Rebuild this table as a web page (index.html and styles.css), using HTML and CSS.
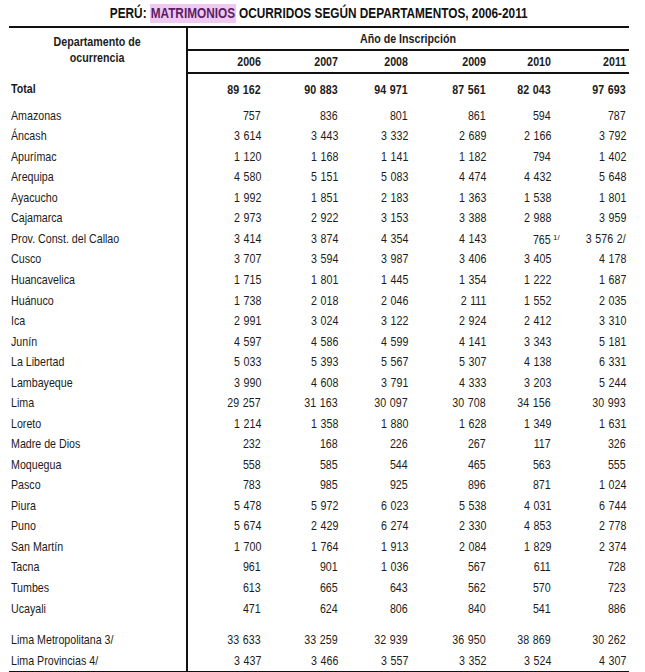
FILE: index.html
```html
<!DOCTYPE html>
<html lang="es">
<head>
<meta charset="utf-8">
<title>Perú: Matrimonios ocurridos según departamentos, 2006-2011</title>
<link rel="stylesheet" href="styles.css">
</head>
<body>
<div class="page">
  <h1 class="title"><span class="n">PERÚ: <span class="hl">MATRIMONIOS</span> OCURRIDOS SEGÚN DEPARTAMENTOS, 2006-2011</span></h1>
  <table class="stats">
    <colgroup>
      <col class="c-dep">
      <col class="c-y1"><col class="c-y2"><col class="c-y3"><col class="c-y4"><col class="c-y5"><col class="c-y6">
    </colgroup>
    <thead>
      <tr class="h1">
        <th rowspan="2" class="dep-head"><span class="n">Departamento de<br>ocurrencia</span></th>
        <th colspan="6" class="group"><span class="n">Año de Inscripción</span></th>
      </tr>
      <tr class="h2">
        <th><span class="n">2006</span></th><th><span class="n">2007</span></th><th><span class="n">2008</span></th><th><span class="n">2009</span></th><th class="y10"><span class="n">2010</span></th><th><span class="n">2011</span></th>
      </tr>
    </thead>
    <tbody>
      <tr class="total"><td><span class="n">Total</span></td><td><span class="n">89 162</span></td><td><span class="n">90 883</span></td><td><span class="n">94 971</span></td><td><span class="n">87 561</span></td><td class="y10"><span class="n">82 043</span></td><td><span class="n">97 693</span></td></tr>
      <tr><td><span class="n">Amazonas</span></td><td><span class="n">757</span></td><td><span class="n">836</span></td><td><span class="n">801</span></td><td><span class="n">861</span></td><td class="y10"><span class="n">594</span></td><td><span class="n">787</span></td></tr>
      <tr><td><span class="n">Áncash</span></td><td><span class="n">3 614</span></td><td><span class="n">3 443</span></td><td><span class="n">3 332</span></td><td><span class="n">2 689</span></td><td class="y10"><span class="n">2 166</span></td><td><span class="n">3 792</span></td></tr>
      <tr><td><span class="n">Apurímac</span></td><td><span class="n">1 120</span></td><td><span class="n">1 168</span></td><td><span class="n">1 141</span></td><td><span class="n">1 182</span></td><td class="y10"><span class="n">794</span></td><td><span class="n">1 402</span></td></tr>
      <tr><td><span class="n">Arequipa</span></td><td><span class="n">4 580</span></td><td><span class="n">5 151</span></td><td><span class="n">5 083</span></td><td><span class="n">4 474</span></td><td class="y10"><span class="n">4 432</span></td><td><span class="n">5 648</span></td></tr>
      <tr><td><span class="n">Ayacucho</span></td><td><span class="n">1 992</span></td><td><span class="n">1 851</span></td><td><span class="n">2 183</span></td><td><span class="n">1 363</span></td><td class="y10"><span class="n">1 538</span></td><td><span class="n">1 801</span></td></tr>
      <tr><td><span class="n">Cajamarca</span></td><td><span class="n">2 973</span></td><td><span class="n">2 922</span></td><td><span class="n">3 153</span></td><td><span class="n">3 388</span></td><td class="y10"><span class="n">2 988</span></td><td><span class="n">3 959</span></td></tr>
      <tr><td><span class="n">Prov. Const. del Callao</span></td><td><span class="n">3 414</span></td><td><span class="n">3 874</span></td><td><span class="n">4 354</span></td><td><span class="n">4 143</span></td><td class="y10"><span class="n">765</span><span class="note">1/</span></td><td><span class="n">3 576 2/</span></td></tr>
      <tr><td><span class="n">Cusco</span></td><td><span class="n">3 707</span></td><td><span class="n">3 594</span></td><td><span class="n">3 987</span></td><td><span class="n">3 406</span></td><td class="y10"><span class="n">3 405</span></td><td><span class="n">4 178</span></td></tr>
      <tr><td><span class="n">Huancavelica</span></td><td><span class="n">1 715</span></td><td><span class="n">1 801</span></td><td><span class="n">1 445</span></td><td><span class="n">1 354</span></td><td class="y10"><span class="n">1 222</span></td><td><span class="n">1 687</span></td></tr>
      <tr><td><span class="n">Huánuco</span></td><td><span class="n">1 738</span></td><td><span class="n">2 018</span></td><td><span class="n">2 046</span></td><td><span class="n">2 111</span></td><td class="y10"><span class="n">1 552</span></td><td><span class="n">2 035</span></td></tr>
      <tr><td><span class="n">Ica</span></td><td><span class="n">2 991</span></td><td><span class="n">3 024</span></td><td><span class="n">3 122</span></td><td><span class="n">2 924</span></td><td class="y10"><span class="n">2 412</span></td><td><span class="n">3 310</span></td></tr>
      <tr><td><span class="n">Junín</span></td><td><span class="n">4 597</span></td><td><span class="n">4 586</span></td><td><span class="n">4 599</span></td><td><span class="n">4 141</span></td><td class="y10"><span class="n">3 343</span></td><td><span class="n">5 181</span></td></tr>
      <tr><td><span class="n">La Libertad</span></td><td><span class="n">5 033</span></td><td><span class="n">5 393</span></td><td><span class="n">5 567</span></td><td><span class="n">5 307</span></td><td class="y10"><span class="n">4 138</span></td><td><span class="n">6 331</span></td></tr>
      <tr><td><span class="n">Lambayeque</span></td><td><span class="n">3 990</span></td><td><span class="n">4 608</span></td><td><span class="n">3 791</span></td><td><span class="n">4 333</span></td><td class="y10"><span class="n">3 203</span></td><td><span class="n">5 244</span></td></tr>
      <tr><td><span class="n">Lima</span></td><td><span class="n">29 257</span></td><td><span class="n">31 163</span></td><td><span class="n">30 097</span></td><td><span class="n">30 708</span></td><td class="y10"><span class="n">34 156</span></td><td><span class="n">30 993</span></td></tr>
      <tr><td><span class="n">Loreto</span></td><td><span class="n">1 214</span></td><td><span class="n">1 358</span></td><td><span class="n">1 880</span></td><td><span class="n">1 628</span></td><td class="y10"><span class="n">1 349</span></td><td><span class="n">1 631</span></td></tr>
      <tr><td><span class="n">Madre de Dios</span></td><td><span class="n">232</span></td><td><span class="n">168</span></td><td><span class="n">226</span></td><td><span class="n">267</span></td><td class="y10"><span class="n">117</span></td><td><span class="n">326</span></td></tr>
      <tr><td><span class="n">Moquegua</span></td><td><span class="n">558</span></td><td><span class="n">585</span></td><td><span class="n">544</span></td><td><span class="n">465</span></td><td class="y10"><span class="n">563</span></td><td><span class="n">555</span></td></tr>
      <tr><td><span class="n">Pasco</span></td><td><span class="n">783</span></td><td><span class="n">985</span></td><td><span class="n">925</span></td><td><span class="n">896</span></td><td class="y10"><span class="n">871</span></td><td><span class="n">1 024</span></td></tr>
      <tr><td><span class="n">Piura</span></td><td><span class="n">5 478</span></td><td><span class="n">5 972</span></td><td><span class="n">6 023</span></td><td><span class="n">5 538</span></td><td class="y10"><span class="n">4 031</span></td><td><span class="n">6 744</span></td></tr>
      <tr><td><span class="n">Puno</span></td><td><span class="n">5 674</span></td><td><span class="n">2 429</span></td><td><span class="n">6 274</span></td><td><span class="n">2 330</span></td><td class="y10"><span class="n">4 853</span></td><td><span class="n">2 778</span></td></tr>
      <tr><td><span class="n">San Martín</span></td><td><span class="n">1 700</span></td><td><span class="n">1 764</span></td><td><span class="n">1 913</span></td><td><span class="n">2 084</span></td><td class="y10"><span class="n">1 829</span></td><td><span class="n">2 374</span></td></tr>
      <tr><td><span class="n">Tacna</span></td><td><span class="n">961</span></td><td><span class="n">901</span></td><td><span class="n">1 036</span></td><td><span class="n">567</span></td><td class="y10"><span class="n">611</span></td><td><span class="n">728</span></td></tr>
      <tr><td><span class="n">Tumbes</span></td><td><span class="n">613</span></td><td><span class="n">665</span></td><td><span class="n">643</span></td><td><span class="n">562</span></td><td class="y10"><span class="n">570</span></td><td><span class="n">723</span></td></tr>
      <tr><td><span class="n">Ucayali</span></td><td><span class="n">471</span></td><td><span class="n">624</span></td><td><span class="n">806</span></td><td><span class="n">840</span></td><td class="y10"><span class="n">541</span></td><td><span class="n">886</span></td></tr>
      <tr class="spacer"><td></td><td></td><td></td><td></td><td></td><td class="y10"></td><td></td></tr>
      <tr><td><span class="n">Lima Metropolitana 3/</span></td><td><span class="n">33 633</span></td><td><span class="n">33 259</span></td><td><span class="n">32 939</span></td><td><span class="n">36 950</span></td><td class="y10"><span class="n">38 869</span></td><td><span class="n">30 262</span></td></tr>
      <tr class="last"><td><span class="n">Lima Provincias 4/</span></td><td><span class="n">3 437</span></td><td><span class="n">3 466</span></td><td><span class="n">3 557</span></td><td><span class="n">3 352</span></td><td class="y10"><span class="n">3 524</span></td><td><span class="n">4 307</span></td></tr>
    </tbody>
  </table>
</div>
</body>
</html>
```
FILE: styles.css
```css
html, body {
  margin: 0;
  padding: 0;
  background: #ffffff;
}

.page {
  width: 620px;
  padding: 2px 0 0 9px;
  font-family: "Liberation Sans", Arial, sans-serif;
  color: #1c1c1c;
}

/* Text is set in Arial metrics and compressed horizontally
   to reproduce the Arial Narrow face of the original document. */
.n {
  display: inline-block;
  white-space: nowrap;
  transform: scaleX(0.82);
  transform-origin: 100% 50%;
}

.title {
  margin: 0;
  height: 24px;
  font-size: 14.4px;
  font-weight: bold;
  line-height: 22px;
  text-align: center;
  color: #111;
}

.title .n { transform-origin: 50% 50%; }

.hl {
  background: #efc9ef;
  color: #5c1f66;
  padding: 1px 1px 2px;
}

.stats {
  width: 620px;
  border-collapse: collapse;
  table-layout: fixed;
  font-size: 13px;
}

.c-dep { width: 178px; }
.c-y1 { width: 77px; }
.c-y2 { width: 77px; }
.c-y3 { width: 70px; }
.c-y4 { width: 78px; }
.c-y5 { width: 75px; }
.c-y6 { width: 65px; }

.stats th, .stats td {
  padding: 0 3px 0 0;
  text-align: right;
  white-space: nowrap;
}

.stats tbody td {
  padding-bottom: 1px;
  word-spacing: 0.8px;
}

.stats td:first-child {
  text-align: left;
  padding-left: 2px;
  border-right: 2px solid #111;
  word-spacing: 0;
}

.stats td:first-child .n { transform-origin: 0 50%; }

.stats .y10 { padding-right: 13px; }

.stats thead tr.h1 th {
  border-top: 2px solid #111;
}

.dep-head {
  text-align: center !important;
  border-right: 2px solid #111;
  vertical-align: top;
  line-height: 16px;
  padding: 6px 0 0 0 !important;
  font-weight: bold;
}

.dep-head .n { transform-origin: 50% 50%; }

.group {
  text-align: left !important;
  padding-left: 172px !important;
  height: 21px;
  border-bottom: 2px solid #111;
  font-weight: bold;
}

.group .n { transform-origin: 0 50%; }

.h2 th {
  height: 21px;
  border-bottom: 2px solid #111;
  font-weight: bold;
}

.total td {
  height: 31px;
  font-weight: bold;
}

tbody tr td {
  height: 19.54px;
  line-height: 14px;
}

.spacer td { height: 10px; }

.last td { border-bottom: 2px solid #111; }

.note {
  display: inline-block;
  width: 7px;
  font-size: 8px;
  vertical-align: 4px;
  margin-left: 2px;
  margin-right: -9px;
  text-align: left;
  word-spacing: 0;
}
```
